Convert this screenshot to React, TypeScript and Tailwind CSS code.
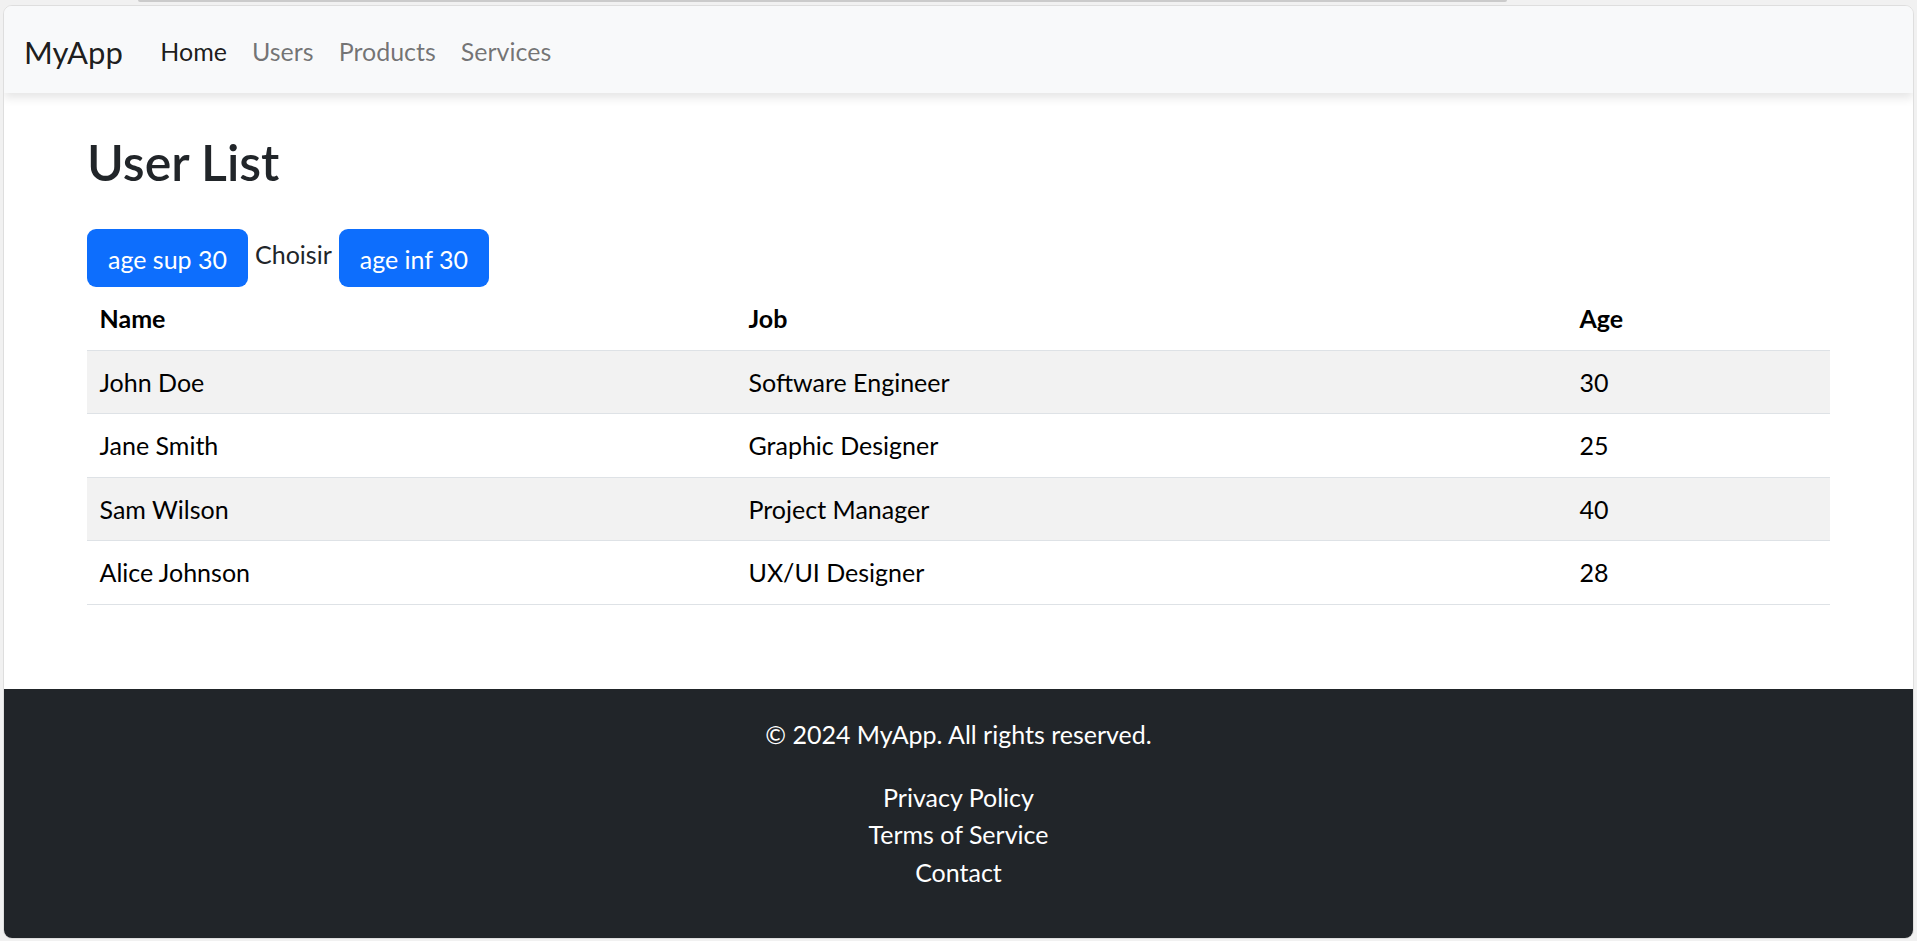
import { useState } from 'react';

type User = {
  name: string;
  job: string;
  age: number;
};

const users: User[] = [
  { name: 'John Doe', job: 'Software Engineer', age: 30 },
  { name: 'Jane Smith', job: 'Graphic Designer', age: 25 },
  { name: 'Sam Wilson', job: 'Project Manager', age: 40 },
  { name: 'Alice Johnson', job: 'UX/UI Designer', age: 28 },
];

const links = ['Home', 'Users', 'Products', 'Services'];

export default function App() {
  const [filter, setFilter] = useState<'all' | 'sup' | 'inf'>('all');

  // the reference shows the full list, so 'all' is the starting state
  const rows = users.filter((u) =>
    filter === 'sup' ? u.age > 30 : filter === 'inf' ? u.age < 30 : true
  );

  return (
    <div className="h-[941px] overflow-hidden bg-[#f1f1f1] flex flex-col font-['Lato',sans-serif]">
      <div className="h-[5px] shrink-0">
        <div className="ml-[138px] w-[1369px] h-[2px] bg-[#cbcbcb] rounded-b-sm" />
      </div>

      <div className="mx-[3px] h-[934px] shrink-0 rounded-[9px] border border-[#dedede] bg-white flex flex-col overflow-hidden">
        <nav className="relative z-10 h-[87px] shrink-0 bg-[#f8f9fa] shadow-[0_5px_9px_rgba(0,0,0,0.1)] flex items-center px-[20px] pt-[4px]">
          <span className="text-[31px] text-black/90 mr-[25px] leading-[46px]">MyApp</span>
          <div className="flex items-center">
            {links.map((l, i) => (
              <a
                key={l}
                href="#"
                className={`px-[12.5px] text-[25px] leading-[37.5px] ${
                  i === 0 ? 'text-black/90' : 'text-black/55'
                }`}
              >
                {l}
              </a>
            ))}
          </div>
        </nav>

        <main className="flex-1 px-[83px] pt-[39px]">
          <h1 className="text-[50px] font-semibold leading-[60px] text-[#212529] mb-[37px]">User List</h1>

          <div className="flex items-start h-[58px]">
            <button
              onClick={() => setFilter('sup')}
              className="h-[58px] px-[21px] pt-[3px] rounded-[9px] bg-[#0d6efd] text-white text-[25px] leading-[37.5px]"
            >
              age sup 30
            </button>
            <span className="mx-[7px] mt-[7px] text-[25px] leading-[37.5px] text-[#212529]">Choisir</span>
            <button
              onClick={() => setFilter('inf')}
              className="h-[58px] px-[21px] pt-[3px] rounded-[9px] bg-[#0d6efd] text-white text-[25px] leading-[37.5px]"
            >
              age inf 30
            </button>
          </div>

          <table className="w-full table-fixed border-collapse text-[25px] leading-[37.5px] text-black">
            <thead>
              <tr className="border-b border-[#dee2e6]">
                <th className="w-[649px] px-[12.5px] pt-[13px] pb-[12px] text-left font-bold">Name</th>
                <th className="w-[831px] px-[12.5px] pt-[13px] pb-[12px] text-left font-bold">Job</th>
                <th className="px-[12.5px] pt-[13px] pb-[12px] text-left font-bold">Age</th>
              </tr>
            </thead>
            <tbody>
              {rows.map((u, i) => (
                <tr
                  key={u.name}
                  className={`border-b border-[#dee2e6] ${i % 2 === 0 ? 'bg-[#f2f2f2]' : 'bg-white'}`}
                >
                  <td className="px-[12.5px] pt-[13px] pb-[12px]">{u.name}</td>
                  <td className="px-[12.5px] pt-[13px] pb-[12px]">{u.job}</td>
                  <td className="px-[12.5px] pt-[13px] pb-[12px]">{u.age}</td>
                </tr>
              ))}
            </tbody>
          </table>
        </main>

        <footer className="h-[249px] shrink-0 bg-[#212529] text-white text-center text-[25px] leading-[37.5px] pt-[27px]">
          <p className="mb-[25px]">© 2024 MyApp. All rights reserved.</p>
          <ul>
            <li><a href="#">Privacy Policy</a></li>
            <li><a href="#">Terms of Service</a></li>
            <li><a href="#">Contact</a></li>
          </ul>
        </footer>
      </div>
    </div>
  );
}
